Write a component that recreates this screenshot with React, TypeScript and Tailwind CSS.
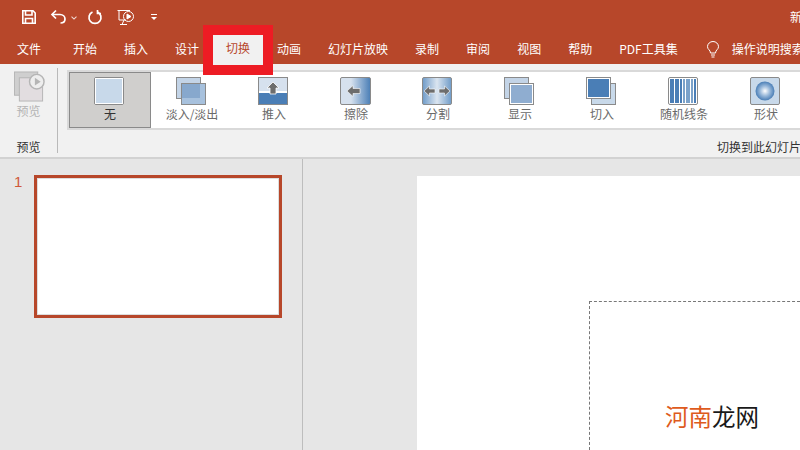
const FONT = "font-['Noto_Sans_CJK_SC','Liberation_Sans',sans-serif]";

const TABS: [string, string][] = [
  ["文件", "ml-[17px]"],
  ["开始", "ml-[32px]"],
  ["插入", "ml-[27px]"],
  ["设计", "ml-[27px]"],
];
const TABS_AFTER = ["动画", "幻灯片放映", "录制", "审阅", "视图", "帮助", "PDF工具集"];

function Tile({ children }: { children: React.ReactNode }) {
  return (
    <svg width="34" height="30" viewBox="1 0 34 30" className="block shrink-0">
      {children}
    </svg>
  );
}

function Defs() {
  return (
    <svg width="0" height="0" className="absolute">
      <defs>
        <linearGradient id="wipe" x1="0" x2="1" y1="0" y2="0">
          <stop offset="0.35" stopColor="#d6e1ee" />
          <stop offset="1" stopColor="#4a7eb6" />
        </linearGradient>
        <linearGradient id="split" x1="0" x2="1" y1="0" y2="0">
          <stop offset="0" stopColor="#6f9bc8" />
          <stop offset="0.5" stopColor="#dbe5f0" />
          <stop offset="1" stopColor="#6f9bc8" />
        </linearGradient>
        <radialGradient id="shape">
          <stop offset="0" stopColor="#ffffff" />
          <stop offset="0.55" stopColor="#94b5d8" />
          <stop offset="1" stopColor="#4a7eb6" />
        </radialGradient>
      </defs>
    </svg>
  );
}

const frame = { stroke: "#8a8a8a", strokeWidth: 1 };

const ITEMS: { label: string; icon: React.ReactNode }[] = [
  {
    label: "无",
    icon: (
      <Tile>
        <rect x="2.5" y="1.5" width="29" height="27" rx="1.5" fill="#c8d9ea" stroke="#8a8a8a" />
        <rect x="3.5" y="2.5" width="27" height="25" fill="none" stroke="#fff" />
      </Tile>
    ),
  },
  {
    label: "淡入/淡出",
    icon: (
      <Tile>
        <rect x="2.5" y="1.5" width="24" height="21" fill="#c3d4e7" {...frame} />
        <rect x="7.5" y="7.5" width="24" height="21" fill="#a7c1dd" {...frame} />
        <rect x="8" y="8" width="18" height="14" fill="#87a8cd" />
      </Tile>
    ),
  },
  {
    label: "推入",
    icon: (
      <Tile>
        <rect x="2.5" y="1.5" width="29" height="27" fill="#d6e1ee" {...frame} />
        <rect x="3" y="17" width="28" height="11" fill="#4a7eb6" />
        <rect x="3" y="15" width="28" height="2" fill="#fff" />
        <path d="M17 6 L23 12 H20 V18 H14 V12 H11 Z" fill="#6d6d6d" stroke="#fff" strokeWidth="0.8" />
      </Tile>
    ),
  },
  {
    label: "擦除",
    icon: (
      <Tile>
        <rect x="2.5" y="1.5" width="30" height="27" rx="1.5" fill="url(#wipe)" stroke="#8a8a8a" />
        <path d="M9 15 L15 9.5 V12.5 H22 V17.5 H15 V20.5 Z" fill="#6d6d6d" stroke="#fff" strokeWidth="0.6" />
      </Tile>
    ),
  },
  {
    label: "分割",
    icon: (
      <Tile>
        <rect x="2.5" y="1.5" width="29" height="27" rx="1.5" fill="url(#split)" stroke="#8a8a8a" />
        <path d="M4 15 L9.5 10 V13 H15 V17 H9.5 V20 Z" fill="#6d6d6d" stroke="#fff" strokeWidth="0.6" />
        <path d="M30 15 L24.5 10 V13 H19 V17 H24.5 V20 Z" fill="#6d6d6d" stroke="#fff" strokeWidth="0.6" />
      </Tile>
    ),
  },
  {
    label: "显示",
    icon: (
      <Tile>
        <rect x="2.5" y="1.5" width="24" height="21" fill="#c3d4e7" {...frame} />
        <rect x="7.5" y="7.5" width="24" height="21" fill="#8fadd0" {...frame} />
        <rect x="8.5" y="8.5" width="22" height="19" fill="none" stroke="#fff" />
      </Tile>
    ),
  },
  {
    label: "切入",
    icon: (
      <Tile>
        <rect x="7.5" y="7.5" width="24" height="21" fill="#c8d9ea" {...frame} />
        <rect x="2.5" y="1.5" width="24" height="21" fill="#4a7eb6" {...frame} />
        <rect x="3.5" y="2.5" width="22" height="19" fill="none" stroke="#fff" />
      </Tile>
    ),
  },
  {
    label: "随机线条",
    icon: (
      <Tile>
        <rect x="2.5" y="1.5" width="29" height="27" rx="1.5" fill="#fff" stroke="#8a8a8a" />
        <rect x="4" y="3" width="4" height="24" fill="#4a7eb6" />
        <rect x="9" y="3" width="4" height="24" fill="#4a7eb6" />
        <rect x="14" y="3" width="2" height="24" fill="#4a7eb6" />
        <rect x="17" y="3" width="2" height="24" fill="#7ba2ca" />
        <rect x="20" y="3" width="4" height="24" fill="#7ba2ca" />
        <rect x="25" y="3" width="2" height="24" fill="#7ba2ca" />
        <rect x="28" y="3" width="2" height="24" fill="#4a7eb6" />
      </Tile>
    ),
  },
  {
    label: "形状",
    icon: (
      <Tile>
        <rect x="2.5" y="1.5" width="29" height="27" rx="1.5" fill="#c8d9ea" stroke="#8a8a8a" />
        <circle cx="17" cy="15" r="9.5" fill="url(#shape)" />
      </Tile>
    ),
  },
];

export default function App() {
  return (
    <div className={`flex h-[450px] w-[800px] flex-col overflow-hidden bg-[#e6e6e6] ${FONT}`}>
      <Defs />
      <div className="h-[64px] shrink-0 overflow-hidden bg-[#b7472a] text-white">
        <div className="flex h-[34px] items-center">
          <svg width="16" height="16" viewBox="0 0 16 16" className="ml-[21px]" fill="none" stroke="#fff" strokeWidth="1.6">
            <path d="M1.8 1.8 H12 L14.2 4 V14.2 H1.8 Z" />
            <path d="M4.5 2 V6 H11 V2" />
            <path d="M4.5 14 V9.5 H11.5 V14" />
          </svg>
          <svg width="17" height="16" viewBox="0 0 17 16" className="ml-[13px]" fill="none" stroke="#fff" strokeWidth="1.7">
            <path d="M2 5.5 H10 C13 5.5 15 7.5 15 10 C15 12.5 13 14 10.5 14" />
            <path d="M6 1.5 L2 5.5 L6 9.5" />
          </svg>
          <span className="ml-[5px] h-[4px] w-[4px] rotate-45 border-r border-b border-white/80" />
          <svg width="16" height="16" viewBox="0 0 16 16" className="ml-[11px]" fill="none" stroke="#fff" strokeWidth="1.7">
            <path d="M5.5 3 A6 6 0 1 0 10.5 3" />
            <path d="M10.5 1 V4.5 H14" />
          </svg>
          <svg width="18" height="17" viewBox="0 0 18 17" className="ml-[14px]" fill="none" stroke="#fff" strokeWidth="1">
            <path d="M0.5 1.5 H13 M2 1.5 V11 H9" />
            <circle cx="11.5" cy="7.5" r="5" />
            <path d="M10 5 L14 7.5 L10 10 Z" fill="#fff" />
            <path d="M7 11 L5 15.5 M3 15.5 H10" />
          </svg>
          <svg width="8" height="8" viewBox="0 0 8 8" className="ml-[15px]" fill="#fff">
            <rect x="1" y="1" width="6" height="1" />
            <path d="M1 4 H7 L4 7 Z" />
          </svg>
          <span className="ml-auto mr-[-2px] text-[12px]">新</span>
        </div>
        <nav className="flex h-[30px] items-center whitespace-nowrap text-[12px] leading-none">
          {TABS.map(([t, m]) => (
            <span key={t} className={`${m} shrink-0`}>{t}</span>
          ))}
          <span className="ml-[14px] flex h-[30px] w-[50px] shrink-0 items-center justify-center bg-[#f1f1f1] pb-[2px] text-[#b7472a]">切换</span>
          <span className="ml-[14px] flex shrink-0 gap-[27px]">
            {TABS_AFTER.map((t) => (
              <span key={t}>{t}</span>
            ))}
          </span>
          <svg width="14" height="17" viewBox="0 0 14 17" className="ml-[28px] shrink-0" fill="none" stroke="#fff" strokeWidth="1">
            <path d="M4.5 12 C4.5 9 1.5 8.5 1.5 5.7 A5.5 5.2 0 0 1 12.5 5.7 C12.5 8.5 9.5 9 9.5 12 Z" />
            <path d="M5 14 H9 M5.5 16 H8.5" />
          </svg>
          <span className="ml-[12px] shrink-0">操作说明搜索</span>
        </nav>
      </div>

      <div className="flex h-[95px] shrink-0 border-b-2 border-[#d2d2d2] bg-[#f1f1f1]">
        <div className="my-[4px] flex w-[58px] shrink-0 flex-col items-center border-r border-[#b9b9b9] text-[12px] leading-none">
          <svg width="34" height="32" viewBox="0 0 34 32" className="mt-[3px] ml-[2px]">
            <rect x="1" y="1" width="24" height="24" fill="#cfcfcf" stroke="#b5b5b5" />
            <rect x="6" y="7" width="24" height="24" fill="#e2dde0" stroke="#b5b5b5" />
            <circle cx="24" cy="11" r="7.5" fill="#eeeeee" stroke="#b5b5b5" strokeWidth="1.5" />
            <path d="M22 7 L28 11 L22 15 Z" fill="#b5b5b5" />
          </svg>
          <span className="mt-[3px] text-[#b4b4b4]">预览</span>
          <span className="mt-[24px] text-[#333]">预览</span>
        </div>
        <div className="min-w-0 flex-1 pl-[9px]">
          <div className="mt-[6px] flex h-[60px] items-stretch border-y-2 border-l-2 border-[#d9d9d9] bg-white text-[12px] leading-none text-[#6a6a6a]">
            {ITEMS.map((item, i) => (
              <div
                key={item.label}
                className={
                  i === 0
                    ? "flex w-[82px] shrink-0 flex-col items-center border border-[#8a8a8a] bg-[#d0cfcd] pt-[3px] text-[#333]"
                    : "flex w-[82px] shrink-0 flex-col items-center pt-[4px]"
                }
              >
                {item.icon}
                <span className="mt-[2px] whitespace-nowrap">{item.label}</span>
              </div>
            ))}
          </div>
          <div className="mt-[11px] pl-[650px] whitespace-nowrap text-[12px] leading-none text-[#333]">切换到此幻灯片</div>
        </div>
      </div>

      <div className="flex min-h-0 flex-1">
        <div className="flex h-full w-[303px] shrink-0 border-r border-[#bdbdbd] pl-[14px] pt-[16px]">
          <span className="w-[20px] font-['Liberation_Sans',sans-serif] text-[15px] leading-[14px] text-[#d0593a]">1</span>
          <div className="h-[143px] w-[248px] border-[3px] border-[#b7472a] bg-white outline outline-1 -outline-offset-4 outline-[#dddddd]" />
        </div>
        <div className="min-w-0 flex-1 pl-[114px] pt-[17px]">
          <div className="h-full bg-white pl-[172px] pt-[125px]">
            <div className="h-full border-t border-l border-dashed border-[#777]" />
          </div>
        </div>
      </div>

      <div className="absolute left-[203px] top-[25px] h-[50px] w-[70px] border-[10px] border-[#ed1c24]" />
      <div className="absolute left-[665px] top-[400px] whitespace-nowrap text-[23.5px] leading-[32px] text-[#1a1a1a]">
        <span className="text-[#de5b1d]">河南</span>龙网
      </div>
    </div>
  );
}
